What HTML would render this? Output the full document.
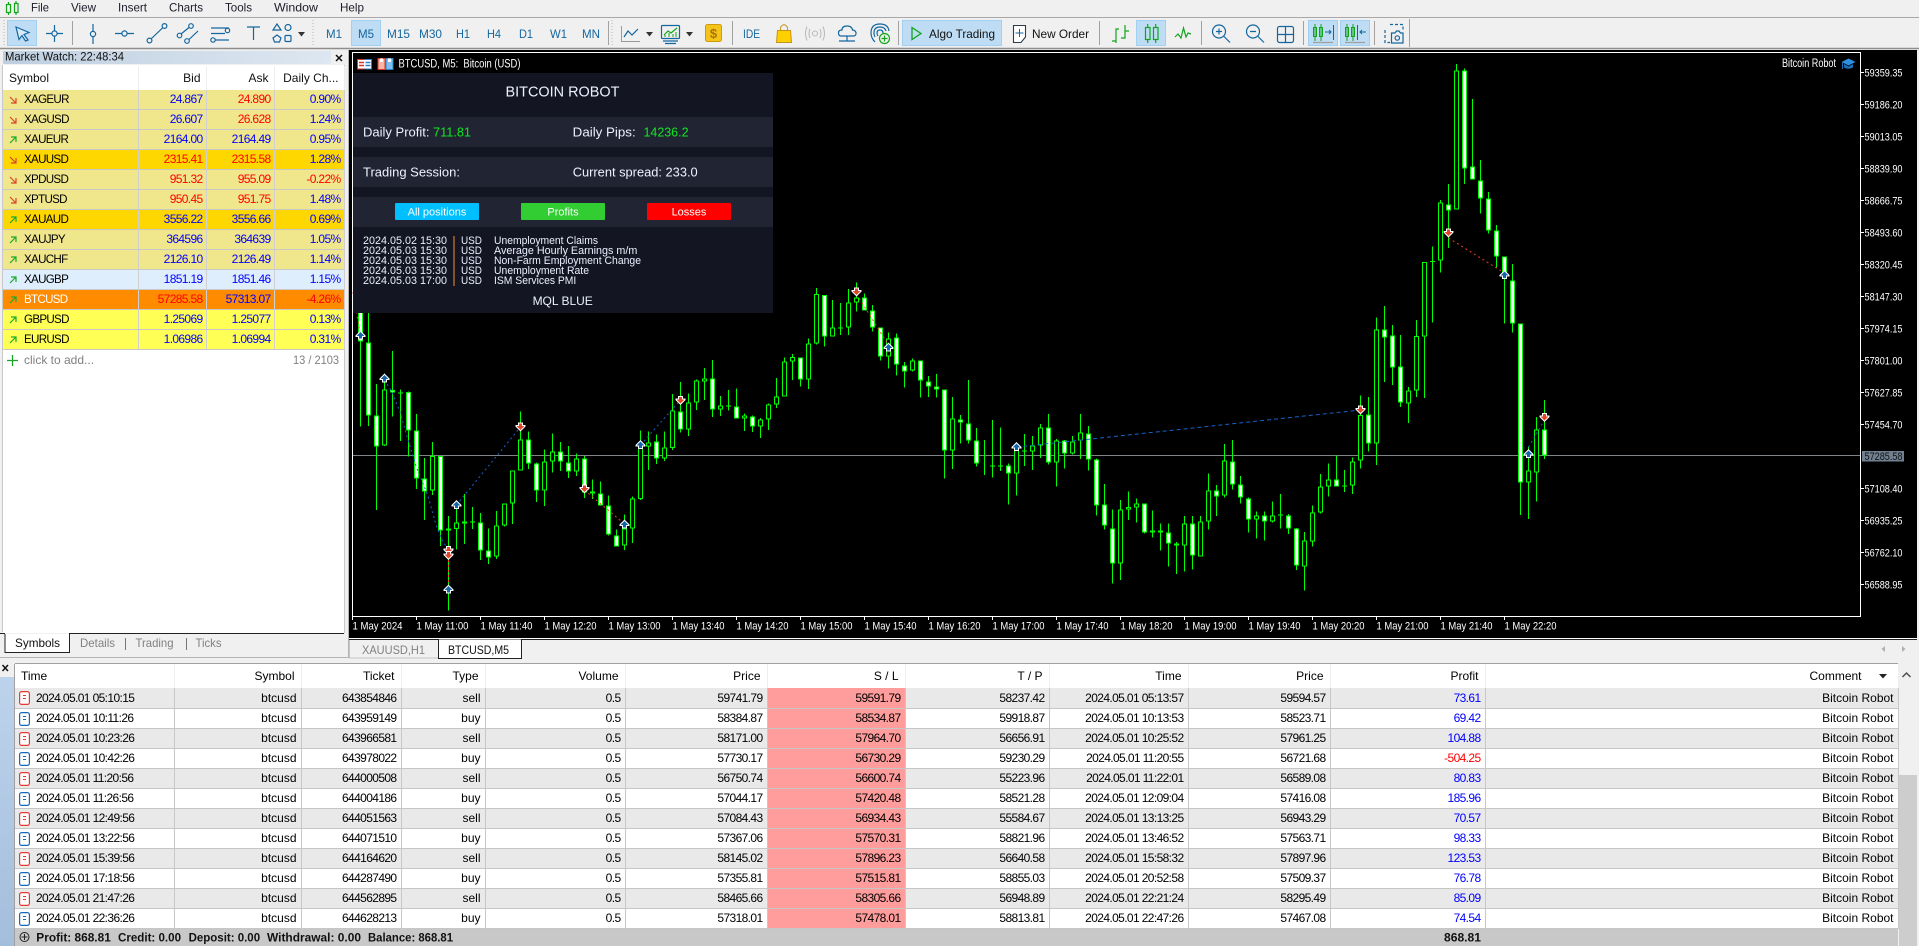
<!DOCTYPE html>
<html><head><meta charset="utf-8"><title>MetaTrader 5</title>
<style>
html,body{margin:0;padding:0;background:#f0f0f0}
body{width:1919px;height:946px;position:relative;overflow:hidden;font:12px "Liberation Sans",Arial,sans-serif;color:#111}
svg text{font-family:"Liberation Sans",Arial,sans-serif}
#bg{position:absolute;left:0;top:0}
.b{stroke:#14669f;fill:none;stroke-width:1.2}
.g{stroke:#12a51c;fill:none;stroke-width:1.2}
.c path{vector-effect:non-scaling-stroke;fill:none}
.cw{stroke:#0f0;stroke-width:1}
.cb{stroke:#0f0;stroke-width:5}
.ci{stroke:#fff;stroke-width:3}
.ck{stroke:#000;stroke-width:3}
table{border-collapse:collapse;table-layout:fixed;position:absolute}
#mw{left:3px;top:66px;width:341px}
#mw td,#mw th{height:19px;padding:0 3px 0 0;border-right:1px solid #d0d0d0;border-bottom:1px solid #c8c8c8;text-align:right;font-weight:normal;white-space:nowrap;overflow:hidden;color:#00f;letter-spacing:-.65px;box-sizing:content-box;line-height:17px}
#mw th{height:24px;background:#fff;color:#111;letter-spacing:0;padding-right:5px;border-bottom:none;border-right:1px solid #eee}
#mw th:first-child{text-align:left;padding-left:6px}
#mw td:first-child{text-align:left;padding-left:21px;color:#000;letter-spacing:-.7px;font-size:11.6px;position:relative}
#mw td svg{position:absolute;left:5.5px;top:6px}
#mw .r,#mw td.r{color:#f00}
#mw .k td{background:#f0e68c}
#mw .o td{background:#ffd700}
#mw .l td{background:#deeefd}
#mw .t td{background:#ff8c00}
#mw .t td:first-child{color:#fff}
#mw .y td{background:#ffff55}
#hist{left:15px;top:664px;width:1883px}
#hist th,#hist td{padding:0 4px 0 0;text-align:right;white-space:nowrap;overflow:hidden;font-weight:normal;box-sizing:border-box}
#hist th{height:24px;background:#fff;padding-right:6px;border-right:1px solid #eee;color:#000}
#hist td{height:20px;border-right:1px solid #c8c8c8;border-bottom:1px solid #c6c6c6;letter-spacing:-.62px;line-height:18px;color:#000}
#hist tbody tr:nth-child(odd) td{background:#e9e9e9}
#hist tbody tr:nth-child(even) td{background:#fff}
#hist td:nth-child(2),#hist td:nth-child(4),#hist td:nth-child(12){letter-spacing:0}
#hist tbody tr td:nth-child(7){background:#ff9c9c}
#hist td:nth-child(11){color:#00f}
#hist th:first-child{text-align:left;padding-left:6px}
#hist td:first-child{text-align:left;padding-left:21px;position:relative}
#hist td svg{position:absolute;left:4px;top:3px}
#hist td.neg{color:#f00}
</style></head><body>
<svg id="bg" width="1919" height="946" viewBox="0 0 1919 946">
<defs>
<symbol id="up" overflow="visible"><path d="M0-5L5 0V1.5H2.5V4H-2.5V1.5H-5V0Z" fill="#fff"/><path d="M0-3.5L3.5 0V.5H1.5V3H-1.5V.5H-3.5V0Z" fill="#1464a8"/></symbol>
<symbol id="dn" overflow="visible"><path d="M0 5L5 0V-1.5H2.5V-4H-2.5V-1.5H-5V0Z" fill="#fff"/><path d="M0 3.5L3.5 0V-.5H1.5V-3H-1.5V-.5H-3.5V0Z" fill="#e0452a"/></symbol>
</defs>
<!-- menu -->
<rect x="0" y="0" width="1919" height="49" fill="#f0f0f0"/>
<path d="M0 17.5H1919" stroke="#a8a8a8"/>
<path d="M0 48.5H1919" stroke="#8e8e8e" stroke-width="1.5"/>
<g fill="none" stroke="#12a51c" stroke-width="1.2"><rect x="6.5" y="4.5" width="4" height="8"/><path d="M8.5 2V4.5M8.5 12.5V15"/><rect x="14.5" y="3.5" width="3.5" height="9"/><path d="M16 1V3.5M16 12.5V15"/></g>
<g font-size="12" fill="#1c1c2a">
<text x="31" y="11.5" textLength="18" lengthAdjust="spacingAndGlyphs">File</text>
<text x="71" y="11.5" textLength="25" lengthAdjust="spacingAndGlyphs">View</text>
<text x="118" y="11.5" textLength="29" lengthAdjust="spacingAndGlyphs">Insert</text>
<text x="169" y="11.5" textLength="34" lengthAdjust="spacingAndGlyphs">Charts</text>
<text x="225" y="11.5" textLength="27" lengthAdjust="spacingAndGlyphs">Tools</text>
<text x="274" y="11.5" textLength="44" lengthAdjust="spacingAndGlyphs">Window</text>
<text x="340" y="11.5" textLength="24" lengthAdjust="spacingAndGlyphs">Help</text>
</g>
<!-- toolbar -->
<g stroke="#b4b4b4" stroke-dasharray="1 2"><path d="M4 20V46M313 20V46M612 20V46"/></g>
<g stroke="#a2a2a2"><path d="M72.5 21V45M608.5 21V45M732.5 21V45M898.5 21V45M1099.5 21V45M1201.5 21V45M1303.5 21V45M1374.5 21V45M1409.5 19V47"/></g>
<g fill="#bedcf3" stroke="#a2d0f2"><rect x="7.5" y="20.5" width="29" height="25"/><rect x="351.5" y="20.5" width="29" height="25"/><rect x="902.5" y="20.5" width="99" height="25"/><rect x="1136.5" y="20.5" width="29" height="25"/><rect x="1308.5" y="20.5" width="29" height="25"/><rect x="1340.5" y="20.5" width="29" height="25"/></g>
<path class="b" d="M16 27L29 32.5 24 34.5 28 40 25.5 41 22 35.5 19 39.5Z" style="fill:#d6eafa"/>
<g class="b"><path d="M46 33.5H63M54.5 25V42"/><circle cx="54.5" cy="33.5" r="2.6" style="fill:#f0f0f0"/></g>
<g class="b"><path d="M93 24V44"/><circle cx="93" cy="34" r="2.6" style="fill:#f0f0f0"/><path d="M115 33.5H134"/><circle cx="124.5" cy="33.5" r="2.6" style="fill:#f0f0f0"/></g>
<g class="b"><path d="M151 39L163 27.5"/><circle cx="149.5" cy="40.5" r="2.4"/><circle cx="164.5" cy="26" r="2.4"/></g>
<g class="b"><path d="M181 34L189 27.5M189 39.5L198 31"/><circle cx="179.5" cy="35.5" r="2.3"/><circle cx="191" cy="26" r="2.3"/><circle cx="187" cy="41" r="2.3"/></g>
<g class="b"><path d="M211 28H229M211 33.5H225M215 40H229"/><circle cx="227.5" cy="30.5" r="2.2"/><circle cx="213" cy="40" r="2.2"/></g>
<path class="b" d="M247 27H260M253.5 27V40"/>
<g class="b"><path d="M277 24L281 30H273Z"/><circle cx="288" cy="27.5" r="3"/><path d="M277 35L281 38 279.5 42H274.5L273 38Z"/><rect x="285" y="35.5" width="6" height="6" rx="1"/></g>
<path d="M298 32H305L301.5 36.5ZM646 32H653L649.5 36.5ZM686 32H693L689.5 36.5Z" fill="#333"/>
<g font-size="12" fill="#14669f">
<text x="326" y="38" textLength="16" lengthAdjust="spacingAndGlyphs">M1</text>
<text x="358" y="38" textLength="16" lengthAdjust="spacingAndGlyphs">M5</text>
<text x="387" y="38" textLength="23" lengthAdjust="spacingAndGlyphs">M15</text>
<text x="419" y="38" textLength="23" lengthAdjust="spacingAndGlyphs">M30</text>
<text x="456" y="38" textLength="14" lengthAdjust="spacingAndGlyphs">H1</text>
<text x="487" y="38" textLength="14" lengthAdjust="spacingAndGlyphs">H4</text>
<text x="519" y="38" textLength="14" lengthAdjust="spacingAndGlyphs">D1</text>
<text x="550" y="38" textLength="17" lengthAdjust="spacingAndGlyphs">W1</text>
<text x="582" y="38" textLength="18" lengthAdjust="spacingAndGlyphs">MN</text>
<text x="743" y="38" textLength="17" lengthAdjust="spacingAndGlyphs">IDE</text>
</g>
<path d="M621.5 26V41.5H640" stroke="#9a9a9a" fill="none"/><path class="b" d="M624 37L628 31 632 35 638 29"/>
<g class="b"><rect x="661.5" y="25.5" width="18" height="13" rx="1"/><path d="M663 41H678M665 43.5H676"/></g><path class="g" d="M664 35L668 31 671 33 677 28"/><path d="M665 37V35M669 37V33M673 37V34M676 37V32" stroke="#12a51c"/>
<rect x="705.5" y="24.5" width="16" height="17" rx="2" fill="#f6c416" stroke="#cd9a10"/><text x="713.5" y="38" font-size="13" font-weight="bold" text-anchor="middle" fill="#a87410">$</text>
<path d="M777.5 30.5H790.5L791.5 42.5H776.5Z" fill="#ffd000" stroke="#c6931a"/><path d="M780.5 31V27.5Q784 22 787.5 27.5V31" fill="none" stroke="#c6931a"/>
<g fill="none" stroke="#b8b8b8"><circle cx="815" cy="33.5" r="2.5"/><path d="M810 29Q808 33.5 810 38M820 29Q822 33.5 820 38M807 26.5Q804 33.5 807 40.5M823 26.5Q826 33.5 823 40.5"/></g>
<g class="b"><path d="M841 36H853Q856.5 36 856 32.5 855 30 852.5 30 852 26 847 26 842 26 842 30 838.5 30 838.5 33 838.5 36 841 36Z"/><path d="M847 36V41M839 41H855"/></g>
<g class="b"><path d="M875 42Q871 38 871 33 871 24 880 24 888 24 889 31M875 37Q874 35 874 33 874 27 880 27 885 27 886 31M878 36Q877 34.5 877 33 877 30 880 30 883 30 883 33"/></g><g class="g"><circle cx="884.5" cy="38.5" r="5"/><path d="M884.5 35.5V41.5M881.5 38.5H887.5"/></g>
<path d="M912 27.5L921 33.5 912 39.5Z" fill="none" stroke="#12a51c" stroke-width="1.3"/>
<text x="929" y="38" font-size="12" fill="#111" textLength="66" lengthAdjust="spacingAndGlyphs">Algo Trading</text>
<path d="M1013.5 25.5H1025.5V37L1021 42.5H1013.5Z" fill="#fff" stroke="#2f3b47" stroke-width="1.1"/><path d="M1019.5 29V37M1015.5 33H1023.5" stroke="#14669f"/>
<text x="1032" y="38" font-size="12" fill="#111" textLength="57" lengthAdjust="spacingAndGlyphs">New Order</text>
<path class="g" d="M1112 41H1116M1116 43V29H1119M1125 25V38H1121M1125 31H1129"/>
<g class="g"><rect x="1145.5" y="27.5" width="4.5" height="12"/><path d="M1147.7 24V27.5M1147.7 39.5V43"/><rect x="1153.5" y="27.5" width="4.5" height="12"/><path d="M1155.7 24V27.5M1155.7 39.5V43"/></g>
<path class="g" d="M1175 37L1178 34 1181 38 1183.5 28 1186 37 1188 33 1191 34"/>
<g class="b"><circle cx="1219" cy="31.5" r="6.5"/><path d="M1224 36.5L1230 42.5M1216 31.5H1222M1219 28.5V34.5"/><circle cx="1253" cy="31.5" r="6.5"/><path d="M1258 36.5L1264 42.5M1250 31.5H1256"/></g>
<g class="b"><rect x="1277.5" y="26.5" width="16" height="16" rx="2"/><path d="M1285.5 26.5V42.5M1277.5 34.5H1293.5"/></g>
<g fill="none" stroke="#12a51c"><rect x="1313.5" y="27.5" width="3" height="9"/><path d="M1315 24V41"/><rect x="1319.5" y="27.5" width="3" height="9"/><path d="M1321 24V41"/></g><path d="M1325 32H1331M1329 30L1331 32 1329 34M1333.5 25V40" stroke="#14669f" fill="none"/><path d="M1313 42.5H1333M1345 42.5H1365" stroke="#a0a0a0" stroke-width="1.3"/>
<g fill="none" stroke="#12a51c"><rect x="1345.5" y="27.5" width="3" height="9"/><path d="M1347 24V41"/><rect x="1351.5" y="27.5" width="3" height="9"/><path d="M1353 24V41"/></g><path d="M1357.5 25V40M1366 32H1360M1362 30L1360 32 1362 34" stroke="#14669f" fill="none"/>
<g class="b"><path d="M1390 24.5H1403V31M1385 30V42.5H1390" stroke-dasharray="3 2"/><path d="M1391.5 33H1395L1396.5 31H1399L1400.5 33H1403V43H1391.5Z" style="fill:#f0f0f0"/><circle cx="1397.3" cy="38" r="2.2"/></g>

<!-- left panel -->
<linearGradient id="mwg"><stop offset="0" stop-color="#bfcfe0"/><stop offset="1" stop-color="#dde7f1"/></linearGradient>
<rect x="3" y="51" width="328" height="13" fill="url(#mwg)"/>
<text x="5" y="60.5" font-size="12" fill="#111" textLength="119" lengthAdjust="spacingAndGlyphs">Market Watch: 22:48:34</text>
<path d="M336 55L342 61M342 55L336 61" stroke="#111" stroke-width="1.5"/>
<rect x="3" y="65" width="341" height="568" fill="#fff"/>
<path d="M2.5 65V632M344.5 65V633" stroke="#c8c8c8"/>
<path d="M0 633.5H5M69 633.5H344" stroke="#222"/>
<path d="M5 634V652.5H69.5V634" fill="#fff" stroke="#222"/>
<path d="M125.5 638V650M186.5 638V650" stroke="#777"/>
<text x="15" y="647" font-size="12" fill="#111" textLength="45" lengthAdjust="spacingAndGlyphs">Symbols</text>
<g font-size="12" fill="#808080"><text x="80" y="647" textLength="35" lengthAdjust="spacingAndGlyphs">Details</text><text x="135.5" y="647" textLength="38" lengthAdjust="spacingAndGlyphs">Trading</text><text x="195.5" y="647" textLength="26" lengthAdjust="spacingAndGlyphs">Ticks</text></g>
<path d="M0 657.5H348.5V50" fill="none" stroke="#b4b4b4"/>
<text x="24" y="364" font-size="12" fill="#808080">click to add...</text>
<text x="339" y="364" font-size="12" fill="#808080" text-anchor="end" textLength="46" lengthAdjust="spacingAndGlyphs">13 / 2103</text>
<path d="M7 360.5H18M12.5 355V366" stroke="#1aa52a" stroke-width="1.3"/>

<!-- chart -->
<rect x="349" y="50" width="1568" height="588" fill="#000"/>
<path d="M352.5 616.5V52.5H1860.5V616.5H352.5Z" fill="none" stroke="#fff"/>
<path d="M1860 72.5h4M1860 104.5h4M1860 136.5h4M1860 168.5h4M1860 200.5h4M1860 232.5h4M1860 264.5h4M1860 296.5h4M1860 328.5h4M1860 360.5h4M1860 392.5h4M1860 424.5h4M1860 488.5h4M1860 520.5h4M1860 552.5h4M1860 584.5h4" stroke="#fff"/>
<path d="M352.5 616v4M416.5 616v4M480.5 616v4M544.5 616v4M608.5 616v4M672.5 616v4M736.5 616v4M800.5 616v4M864.5 616v4M928.5 616v4M992.5 616v4M1056.5 616v4M1120.5 616v4M1184.5 616v4M1248.5 616v4M1312.5 616v4M1376.5 616v4M1440.5 616v4M1504.5 616v4" stroke="#fff"/>
<path d="M353 455.5H1860" stroke="#7f8489"/>
<g class="c" shape-rendering="crispEdges">
<g transform="translate(0,320) scale(1,.33333)">
<path class="cw" d="M360.5-30V320M368.5-30V318M376.5 192V570M384.5 160V378M392.5 93V290M400.5 208V363M408.5 215V410M416.5 282V507M424.5 414V600M432.5 366V525M440.5 408V678M448.5 588V872M456.5 550V688M464.5 522V672M472.5 561V627M480.5 579V720M488.5 625V732M496.5 573V717M504.5 550V620M512.5 451V612M520.5 274V452M528.5 334V447M536.5 428V546M544.5 388V558M552.5 340V458M560.5 366V453M568.5 378V474M576.5 400V468M584.5 408V534M592.5 478V537M600.5 484V556M608.5 526V647M616.5 628V680M624.5 583V690M632.5 529V669M640.5 331V540M648.5 334V450M656.5 344V432M664.5 334V423M672.5 222V390M680.5 186V338M688.5 220V348M696.5 178V270M704.5 144V240M712.5 120V291M720.5 228V288M728.5 210V272M736.5 205V296M744.5 280V333M752.5 286V336M760.5 294V354M768.5 250V330M776.5 174V264M784.5 112V230M792.5 102V180M800.5 112V200M808.5 55V207M816.5-96V74M824.5-75V80M832.5-60V50M840.5-51V45M848.5-93V45"/>
<path class="cb" d="M360.5-30V65M368.5 67V287M376.5 286V380M384.5 208V377M392.5 210V218M400.5 217V220M408.5 216V332M416.5 331V476M424.5 475V515M432.5 408V512M440.5 408V632M448.5 625V632M456.5 607V627M464.5 604V611M472.5 605V608M480.5 607V692M488.5 691V713M496.5 616V710M504.5 550V617M512.5 451V551M520.5 358V452M528.5 358V431M536.5 430V512M544.5 424V512M552.5 394V424M560.5 394V425M568.5 427V454M576.5 415V455M584.5 415V518M592.5 514V521M600.5 520V557M608.5 556V644M616.5 646V680M624.5 625V677M632.5 535V626M640.5 375V537M648.5 367V380M656.5 364V416M664.5 382V416M672.5 271V384M680.5 274V329M688.5 247V329M696.5 181V248M704.5 175V185M712.5 175V269M720.5 256V269M728.5 257V260M736.5 259V296M744.5 287V296M752.5 289V320M760.5 298V320M768.5 253V299M776.5 229V254M784.5 124V230M792.5 111V124M800.5 112V178M808.5 70V178M816.5-78V70M824.5-75V49M832.5 22V49M840.5 22V25M848.5-53V23"/>
<path class="ci" d="M360.5-30V62M368.5 70V284M376.5 289V377M392.5 213V215M408.5 219V329M416.5 334V473M424.5 478V512M440.5 411V629M448.5 628V629M480.5 610V689M488.5 694V710M528.5 361V428M536.5 433V509M560.5 397V422M568.5 430V451M584.5 418V515M592.5 517V518M600.5 523V554M608.5 559V641M616.5 649V677M656.5 367V413M680.5 277V326M712.5 178V266M736.5 262V293M752.5 292V317M800.5 115V175M824.5-72V46"/>
<path class="ck" d="M384.5 211V374M432.5 411V509M456.5 610V624M464.5 607V608M496.5 619V707M504.5 553V614M512.5 454V548M520.5 361V449M544.5 427V509M552.5 397V421M576.5 418V452M624.5 628V674M632.5 538V623M640.5 378V534M648.5 370V377M664.5 385V413M672.5 274V381M688.5 250V326M696.5 184V245M704.5 178V182M720.5 259V266M744.5 290V293M760.5 301V317M768.5 256V296M776.5 232V251M784.5 127V227M792.5 114V121M808.5 73V175M816.5-75V67M832.5 25V46M848.5-50V20"/>
</g>
<g transform="translate(0,250) scale(1,.33333)">
<path class="cw" d="M856.5 97V185M864.5 130V182M872.5 165V245M880.5 232V332M888.5 247V356M896.5 250V377M904.5 336V413M912.5 325V365M920.5 331V443M928.5 378V441M936.5 372V443M944.5 418V686M952.5 441V657M960.5 495V580M968.5 390V580M976.5 534V650M984.5 570V675M992.5 510V683M1000.5 533V663M1008.5 640V764M1016.5 578V737M1024.5 552V648M1032.5 558V660M1040.5 522V624M1048.5 492V644M1056.5 567V710M1064.5 570V656M1072.5 558V614M1080.5 492V627M1088.5 528V662M1096.5 625V797M1104.5 702V838M1112.5 778V1000M1120.5 750V990M1128.5 724V810M1136.5 746V818M1144.5 760V850M1152.5 782V863M1160.5 820V902M1168.5 820V950M1176.5 876V972M1184.5 798V965M1192.5 798V958M1200.5 798V920M1208.5 670V838M1216.5 705V798M1224.5 582V743M1232.5 570V718M1240.5 678V760M1248.5 742V848M1256.5 784V866M1264.5 784V872M1272.5 754V818M1280.5 732V836M1288.5 792V852M1296.5 834V960M1304.5 846V1022M1312.5 766V890M1320.5 672V790M1328.5 640V740M1336.5 617V709M1344.5 660V726M1352.5 622V732M1360.5 436V656M1368.5 441V604"/>
<path class="cb" d="M856.5 142V157M864.5 142V181M872.5 182V232M880.5 232V320M888.5 265V320M896.5 262V344M904.5 346V364M912.5 331V362M920.5 331V391M928.5 394V409M936.5 409V418M944.5 418V601M952.5 505V601M960.5 508V517M968.5 520V571M976.5 571V640M984.5 646V647M992.5 646V650M1000.5 646V650M1008.5 646V670M1016.5 600V670M1024.5 601V605M1032.5 587V605M1040.5 532V586M1048.5 532V638M1056.5 571V637M1064.5 572V610M1072.5 574V610M1080.5 547V572M1088.5 550V628M1096.5 628V766M1104.5 763V826M1112.5 835V940M1120.5 778V940M1128.5 771V778M1136.5 760V773M1144.5 760V848M1152.5 841V847M1160.5 841V847M1168.5 847V880M1176.5 880V886M1184.5 820V887M1192.5 820V916M1200.5 814V920M1208.5 721V814M1216.5 721V739M1224.5 631V737M1232.5 635V703M1240.5 703V742M1248.5 745V808M1256.5 796V808M1264.5 796V814M1272.5 796V814M1280.5 793V797M1288.5 796V835M1296.5 835V946M1304.5 871V950M1312.5 787V875M1320.5 709V788M1328.5 688V709M1336.5 688V709M1344.5 706V710M1352.5 634V707M1360.5 495V632M1368.5 493V581"/>
<path class="ci" d="M864.5 145V178M872.5 185V229M880.5 235V317M896.5 265V341M904.5 349V361M920.5 334V388M928.5 397V406M936.5 412V415M944.5 421V598M960.5 511V514M968.5 523V568M976.5 574V637M1008.5 649V667M1048.5 535V635M1064.5 575V607M1088.5 553V625M1096.5 631V763M1104.5 766V823M1112.5 838V937M1144.5 763V845M1152.5 844V845M1160.5 844V845M1168.5 850V877M1176.5 883V884M1192.5 823V913M1216.5 724V736M1232.5 638V700M1240.5 706V739M1248.5 748V805M1264.5 799V811M1288.5 799V832M1296.5 838V943M1336.5 691V706M1368.5 496V578"/>
<path class="ck" d="M856.5 145V154M888.5 268V317M912.5 334V359M952.5 508V598M1016.5 603V667M1032.5 590V602M1040.5 535V583M1056.5 574V634M1072.5 577V607M1080.5 550V569M1120.5 781V937M1128.5 774V775M1136.5 763V770M1184.5 823V884M1200.5 817V917M1208.5 724V811M1224.5 634V734M1256.5 799V805M1272.5 799V811M1304.5 874V947M1312.5 790V872M1320.5 712V785M1328.5 691V706M1352.5 637V704M1360.5 498V629"/>
</g>
<g transform="translate(0,300) scale(1,.33333)">
<path class="cw" d="M1376.5 52V495M1384.5 18V246M1392.5 75V255M1400.5 105V321M1408.5 261V369M1416.5 60V291M1520.5 70V645M1528.5 441V657M1536.5 351V605M1544.5 300V477"/>
<path class="cb" d="M1376.5 88V431M1384.5 88V113M1392.5 106V203M1400.5 199V308M1408.5 271V311M1416.5 108V272M1520.5 70V548M1528.5 511V548M1536.5 388V518M1544.5 388V466"/>
<path class="ci" d="M1384.5 91V110M1392.5 109V200M1400.5 202V305M1520.5 73V545M1544.5 391V463"/>
<path class="ck" d="M1376.5 91V428M1408.5 274V308M1416.5 111V269M1528.5 514V545M1536.5 391V515"/>
</g>
<g transform="translate(0,40) scale(1,.33333)">
<path class="cw" d="M1424.5 666V1074M1432.5 620V848M1440.5 480V698M1448.5 432V624M1456.5 72V508M1464.5 85V432M1472.5 177V418M1480.5 360V520M1488.5 456V580M1496.5 555V682M1504.5 649V850M1512.5 672V878"/>
<path class="cb" d="M1424.5 666V890M1432.5 663V666M1440.5 487V661M1448.5 493V511M1456.5 91V508M1464.5 91V385M1472.5 380V418M1480.5 421V476M1488.5 476V571M1496.5 571V649M1504.5 649V717M1512.5 722V850"/>
<path class="ci" d="M1448.5 496V508M1464.5 94V382M1472.5 383V415M1480.5 424V473M1488.5 479V568M1496.5 574V646M1504.5 652V714M1512.5 725V847"/>
<path class="ck" d="M1424.5 669V887M1440.5 490V658M1456.5 94V505"/>
</g>
</g>
<!-- trade lines -->
<g fill="none" stroke-width="1" stroke-dasharray="2 3" stroke="#1464c8">
<path d="M384.5 380L392 392 400 412 408 440 416 466 428 496 436 525 442 540 448.5 550"/>
<path d="M456.5 505L520.5 427"/>
<path d="M640.5 445L680.5 400"/>
<path d="M1016.5 447L1360.5 410" stroke-dasharray="4 3"/>
<path d="M1528.5 447L1544.5 420"/>
</g>
<g fill="none" stroke="#f03c28" stroke-dasharray="2 3">
<path d="M448.5 555V585"/><path d="M584.5 490L624.5 524"/><path d="M856.5 294L888.5 345"/><path d="M1448.5 238L1504.5 273"/><path d="M353 292L360 333"/>
</g>
<use href="#up" x="360.5" y="335.5"/><use href="#up" x="384.5" y="378.5"/><use href="#up" x="448.5" y="589.5"/><use href="#up" x="456.5" y="505"/><use href="#up" x="624.5" y="524.5"/><use href="#up" x="640.5" y="445"/><use href="#up" x="888.5" y="347.5"/><use href="#up" x="1016.5" y="447"/><use href="#up" x="1504.5" y="275"/><use href="#up" x="1528.5" y="454"/>
<use href="#dn" x="448.5" y="550"/><use href="#dn" x="448.5" y="555"/><use href="#dn" x="520.5" y="426.5"/><use href="#dn" x="584.5" y="488.5"/><use href="#dn" x="680.5" y="400"/><use href="#dn" x="856.5" y="291.5"/><use href="#dn" x="1360.5" y="409.5"/><use href="#dn" x="1448.5" y="232.5"/><use href="#dn" x="1544.5" y="417"/>
<g transform="translate(353,287)"><path d="M0 4L4 0V-2H0Z" fill="#fff"/></g>
<!-- chart title -->
<g><rect x="357.5" y="59.5" width="14" height="9.5" fill="#fff" stroke="#d8352a"/><path d="M364.5 59.5H371.5V69H364.5" fill="none" stroke="#2d7fc9"/><path d="M359 62.5H364M359 65.5H364" stroke="#d8352a" stroke-width="1.4"/><path d="M365.5 62.5H370.5M365.5 65.5H370.5" stroke="#2d7fc9" stroke-width="1.4"/></g>
<g><path d="M378 58.5H385V69.5H378Z" fill="#f7b7a8" stroke="#d8352a"/><path d="M380 58.5H383V62H380Z" fill="#fff"/><path d="M386 58.5H393V69.5H386Z" fill="#7fc0ee" stroke="#2d7fc9"/><path d="M388 58.5H391V62H388Z" fill="#fff"/></g>
<text x="398.5" y="67.5" font-size="11.5" fill="#fff" textLength="122" lengthAdjust="spacingAndGlyphs">BTCUSD, M5:&#160; Bitcoin (USD)</text>
<text x="1782" y="67" font-size="11.5" fill="#fff" textLength="54" lengthAdjust="spacingAndGlyphs">Bitcoin Robot</text>
<path d="M1848.5 58.5L1855.5 62 1848.5 65.5 1841.5 62Z" fill="#2c90e0"/><path d="M1844 64V67.5Q1848.5 70 1853 67.5V64L1848.5 66.5Z" fill="#1c6fb8"/><path d="M1842.5 62V69" stroke="#1c6fb8"/>
<!-- panel -->
<rect x="353" y="73" width="420" height="240" fill="#141522"/>
<rect x="353" y="117" width="420" height="30" fill="#212433"/><rect x="353" y="157" width="420" height="30" fill="#212433"/><rect x="353" y="197" width="420" height="30" fill="#212433"/>
<text x="505.500" y="96.5" font-size="15" fill="#eaf0ff" textLength="114" lengthAdjust="spacingAndGlyphs">BITCOIN ROBOT</text>
<g font-size="13.3" fill="#eef2ff">
<text x="363" y="136.5" textLength="66.5" lengthAdjust="spacingAndGlyphs">Daily Profit:</text><text x="433" y="136.5" fill="#10e820" textLength="38" lengthAdjust="spacingAndGlyphs">711.81</text>
<text x="572.7" y="136.5" textLength="63" lengthAdjust="spacingAndGlyphs">Daily Pips:</text><text x="643.5" y="136.5" fill="#10e820" textLength="45" lengthAdjust="spacingAndGlyphs">14236.2</text>
<text x="363" y="176.5" textLength="97" lengthAdjust="spacingAndGlyphs">Trading Session:</text>
<text x="572.7" y="176.5" textLength="125" lengthAdjust="spacingAndGlyphs">Current spread: 233.0</text>
</g>
<rect x="395" y="203" width="84" height="17" rx="1" fill="#00bfff"/><rect x="521" y="203" width="84" height="17" rx="1" fill="#32cd32"/><rect x="647" y="203" width="84" height="17" rx="1" fill="#f00"/>
<g font-size="11" fill="#fff" text-anchor="middle"><text x="437" y="215.500">All positions</text><text x="563" y="215.500">Profits</text><text x="689" y="215.500">Losses</text></g>
<path d="M454 236V286" stroke="#c0772e" stroke-width="1.3"/>
<g font-size="11" fill="#eaf0ff">
<text x="363" y="244" textLength="84" lengthAdjust="spacingAndGlyphs">2024.05.02 15:30</text><text x="461" y="244" textLength="21" lengthAdjust="spacingAndGlyphs">USD</text><text x="494" y="244" textLength="104" lengthAdjust="spacingAndGlyphs">Unemployment Claims</text>
<text x="363" y="254" textLength="84" lengthAdjust="spacingAndGlyphs">2024.05.03 15:30</text><text x="461" y="254" textLength="21" lengthAdjust="spacingAndGlyphs">USD</text><text x="494" y="254" textLength="143.3" lengthAdjust="spacingAndGlyphs">Average Hourly Earnings m/m</text>
<text x="363" y="264" textLength="84" lengthAdjust="spacingAndGlyphs">2024.05.03 15:30</text><text x="461" y="264" textLength="21" lengthAdjust="spacingAndGlyphs">USD</text><text x="494" y="264" textLength="147" lengthAdjust="spacingAndGlyphs">Non-Farm Employment Change</text>
<text x="363" y="274" textLength="84" lengthAdjust="spacingAndGlyphs">2024.05.03 15:30</text><text x="461" y="274" textLength="21" lengthAdjust="spacingAndGlyphs">USD</text><text x="494" y="274" textLength="95" lengthAdjust="spacingAndGlyphs">Unemployment Rate</text>
<text x="363" y="284" textLength="84" lengthAdjust="spacingAndGlyphs">2024.05.03 17:00</text><text x="461" y="284" textLength="21" lengthAdjust="spacingAndGlyphs">USD</text><text x="494" y="284" textLength="82.3" lengthAdjust="spacingAndGlyphs">ISM Services PMI</text>
</g>
<text x="562.7" y="305" font-size="12" fill="#eaf0ff" text-anchor="middle">MQL BLUE</text>
<!-- price axis -->
<g font-size="11" fill="#fff">
<text x="1864.5" y="76.5" textLength="38" lengthAdjust="spacingAndGlyphs">59359.35</text>
<text x="1864.5" y="108.5" textLength="38" lengthAdjust="spacingAndGlyphs">59186.20</text>
<text x="1864.5" y="140.5" textLength="38" lengthAdjust="spacingAndGlyphs">59013.05</text>
<text x="1864.5" y="172.5" textLength="38" lengthAdjust="spacingAndGlyphs">58839.90</text>
<text x="1864.5" y="204.5" textLength="38" lengthAdjust="spacingAndGlyphs">58666.75</text>
<text x="1864.5" y="236.5" textLength="38" lengthAdjust="spacingAndGlyphs">58493.60</text>
<text x="1864.5" y="268.5" textLength="38" lengthAdjust="spacingAndGlyphs">58320.45</text>
<text x="1864.5" y="300.5" textLength="38" lengthAdjust="spacingAndGlyphs">58147.30</text>
<text x="1864.5" y="332.5" textLength="38" lengthAdjust="spacingAndGlyphs">57974.15</text>
<text x="1864.5" y="364.5" textLength="38" lengthAdjust="spacingAndGlyphs">57801.00</text>
<text x="1864.5" y="396.5" textLength="38" lengthAdjust="spacingAndGlyphs">57627.85</text>
<text x="1864.5" y="428.5" textLength="38" lengthAdjust="spacingAndGlyphs">57454.70</text>
<text x="1864.5" y="492.5" textLength="38" lengthAdjust="spacingAndGlyphs">57108.40</text>
<text x="1864.5" y="524.5" textLength="38" lengthAdjust="spacingAndGlyphs">56935.25</text>
<text x="1864.5" y="556.5" textLength="38" lengthAdjust="spacingAndGlyphs">56762.10</text>
<text x="1864.5" y="588.5" textLength="38" lengthAdjust="spacingAndGlyphs">56588.95</text>
</g>
<rect x="1862" y="451" width="42" height="10.5" fill="#708090"/>
<text x="1864.5" y="460" font-size="11" fill="#111" textLength="38" lengthAdjust="spacingAndGlyphs">57285.58</text>
<!-- time axis -->
<g font-size="11" fill="#fff">
<text x="352.5" y="629.5" textLength="50" lengthAdjust="spacingAndGlyphs">1 May 2024</text>
<text x="416.5" y="629.5" textLength="52" lengthAdjust="spacingAndGlyphs">1 May 11:00</text>
<text x="480.5" y="629.5" textLength="52" lengthAdjust="spacingAndGlyphs">1 May 11:40</text>
<text x="544.5" y="629.5" textLength="52" lengthAdjust="spacingAndGlyphs">1 May 12:20</text>
<text x="608.5" y="629.5" textLength="52" lengthAdjust="spacingAndGlyphs">1 May 13:00</text>
<text x="672.5" y="629.5" textLength="52" lengthAdjust="spacingAndGlyphs">1 May 13:40</text>
<text x="736.5" y="629.5" textLength="52" lengthAdjust="spacingAndGlyphs">1 May 14:20</text>
<text x="800.5" y="629.5" textLength="52" lengthAdjust="spacingAndGlyphs">1 May 15:00</text>
<text x="864.5" y="629.5" textLength="52" lengthAdjust="spacingAndGlyphs">1 May 15:40</text>
<text x="928.5" y="629.5" textLength="52" lengthAdjust="spacingAndGlyphs">1 May 16:20</text>
<text x="992.5" y="629.5" textLength="52" lengthAdjust="spacingAndGlyphs">1 May 17:00</text>
<text x="1056.5" y="629.5" textLength="52" lengthAdjust="spacingAndGlyphs">1 May 17:40</text>
<text x="1120.5" y="629.5" textLength="52" lengthAdjust="spacingAndGlyphs">1 May 18:20</text>
<text x="1184.5" y="629.5" textLength="52" lengthAdjust="spacingAndGlyphs">1 May 19:00</text>
<text x="1248.5" y="629.5" textLength="52" lengthAdjust="spacingAndGlyphs">1 May 19:40</text>
<text x="1312.5" y="629.5" textLength="52" lengthAdjust="spacingAndGlyphs">1 May 20:20</text>
<text x="1376.5" y="629.5" textLength="52" lengthAdjust="spacingAndGlyphs">1 May 21:00</text>
<text x="1440.5" y="629.5" textLength="52" lengthAdjust="spacingAndGlyphs">1 May 21:40</text>
<text x="1504.5" y="629.5" textLength="52" lengthAdjust="spacingAndGlyphs">1 May 22:20</text>
</g>
<!-- chart tabs -->
<path d="M349 638.5H1917" stroke="#fff"/>
<path d="M349 639.5H1917" stroke="#222"/>
<path d="M438.5 639.5V658.5H521.5V639.5" fill="#fff" stroke="#222"/>
<path d="M349.5 640V658H438" fill="none" stroke="#c4c4c4"/>
<text x="362" y="654" font-size="12" fill="#808080" textLength="63" lengthAdjust="spacingAndGlyphs">XAUUSD,H1</text>
<text x="448" y="654" font-size="12" fill="#111" textLength="61" lengthAdjust="spacingAndGlyphs">BTCUSD,M5</text>
<path d="M1885 646V652L1881.5 649ZM1902 646V652L1905.5 649Z" fill="#b0b0b0"/>
<!-- bottom -->
<path d="M15 663.5H1898" stroke="#a0a0a0"/>
<path d="M2.5 665L8 671M8 665L2.5 671" stroke="#111" stroke-width="1.5"/>
<linearGradient id="st" x1="0" y1="0" x2="0" y2="1"><stop offset="0" stop-color="#bdd3ec"/><stop offset="1" stop-color="#a3bedb"/></linearGradient>
<rect x="0" y="677" width="14" height="269" fill="url(#st)"/>
<path d="M14.5 664V946" stroke="#a0a0a0"/>
<!-- summary bar -->
<rect x="15" y="928" width="1883" height="18" fill="#c8c8c8"/>
<circle cx="24.5" cy="937" r="4.5" fill="none" stroke="#222"/><path d="M21.5 937H27.5M24.5 934V940" stroke="#222"/>
<g font-size="12" font-weight="bold" fill="#111">
<text x="36.3" y="941.5" textLength="74.5" lengthAdjust="spacingAndGlyphs">Profit: 868.81</text>
<text x="118" y="941.5" textLength="63" lengthAdjust="spacingAndGlyphs">Credit: 0.00</text>
<text x="188.6" y="941.5" textLength="71.5" lengthAdjust="spacingAndGlyphs">Deposit: 0.00</text>
<text x="267" y="941.5" textLength="94" lengthAdjust="spacingAndGlyphs">Withdrawal: 0.00</text>
<text x="368" y="941.5" textLength="85" lengthAdjust="spacingAndGlyphs">Balance: 868.81</text>
<text x="1444" y="941.5" textLength="37" lengthAdjust="spacingAndGlyphs">868.81</text>
</g>
<!-- scrollbar -->
<rect x="1898" y="664" width="21" height="282" fill="#f0f0f0"/>
<path d="M1902.5 677L1906.5 673 1910.5 677" fill="none" stroke="#505050" stroke-width="1.5"/>
<rect x="1899" y="775" width="18" height="171" fill="#cdcdcd"/>
</svg>

<table id="mw"><colgroup><col style="width:135px"><col style="width:68px"><col style="width:68px"><col style="width:70px"></colgroup>
<tr><th>Symbol</th><th>Bid</th><th>Ask</th><th>Daily Ch...</th></tr>
<tr class="k"><td><svg width="8" height="8"><path d="M1 1L7 7M2 7H7V2" fill="none" stroke="#d8462a" stroke-width="1.2"/></svg>XAGEUR</td><td>24.867</td><td class="r">24.890</td><td>0.90%</td></tr>
<tr class="k"><td><svg width="8" height="8"><path d="M1 1L7 7M2 7H7V2" fill="none" stroke="#d8462a" stroke-width="1.2"/></svg>XAGUSD</td><td>26.607</td><td class="r">26.628</td><td>1.24%</td></tr>
<tr class="k"><td><svg width="8" height="8"><path d="M1 7L7 1M2 1H7V6" fill="none" stroke="#1aaa2a" stroke-width="1.2"/></svg>XAUEUR</td><td>2164.00</td><td>2164.49</td><td>0.95%</td></tr>
<tr class="o"><td><svg width="8" height="8"><path d="M1 1L7 7M2 7H7V2" fill="none" stroke="#d8462a" stroke-width="1.2"/></svg>XAUUSD</td><td class="r">2315.41</td><td class="r">2315.58</td><td>1.28%</td></tr>
<tr class="k"><td><svg width="8" height="8"><path d="M1 1L7 7M2 7H7V2" fill="none" stroke="#d8462a" stroke-width="1.2"/></svg>XPDUSD</td><td class="r">951.32</td><td class="r">955.09</td><td class="r">-0.22%</td></tr>
<tr class="k"><td><svg width="8" height="8"><path d="M1 1L7 7M2 7H7V2" fill="none" stroke="#d8462a" stroke-width="1.2"/></svg>XPTUSD</td><td class="r">950.45</td><td class="r">951.75</td><td>1.48%</td></tr>
<tr class="o"><td><svg width="8" height="8"><path d="M1 7L7 1M2 1H7V6" fill="none" stroke="#1aaa2a" stroke-width="1.2"/></svg>XAUAUD</td><td>3556.22</td><td>3556.66</td><td>0.69%</td></tr>
<tr class="k"><td><svg width="8" height="8"><path d="M1 7L7 1M2 1H7V6" fill="none" stroke="#1aaa2a" stroke-width="1.2"/></svg>XAUJPY</td><td>364596</td><td>364639</td><td>1.05%</td></tr>
<tr class="k"><td><svg width="8" height="8"><path d="M1 7L7 1M2 1H7V6" fill="none" stroke="#1aaa2a" stroke-width="1.2"/></svg>XAUCHF</td><td>2126.10</td><td>2126.49</td><td>1.14%</td></tr>
<tr class="l"><td><svg width="8" height="8"><path d="M1 7L7 1M2 1H7V6" fill="none" stroke="#1aaa2a" stroke-width="1.2"/></svg>XAUGBP</td><td>1851.19</td><td>1851.46</td><td>1.15%</td></tr>
<tr class="t"><td><svg width="8" height="8"><path d="M1 7L7 1M2 1H7V6" fill="none" stroke="#1aaa2a" stroke-width="1.2"/></svg>BTCUSD</td><td class="r">57285.58</td><td>57313.07</td><td class="r">-4.26%</td></tr>
<tr class="y"><td><svg width="8" height="8"><path d="M1 7L7 1M2 1H7V6" fill="none" stroke="#1aaa2a" stroke-width="1.2"/></svg>GBPUSD</td><td>1.25069</td><td>1.25077</td><td>0.13%</td></tr>
<tr class="y"><td><svg width="8" height="8"><path d="M1 7L7 1M2 1H7V6" fill="none" stroke="#1aaa2a" stroke-width="1.2"/></svg>EURUSD</td><td>1.06986</td><td>1.06994</td><td>0.31%</td></tr>
</table>

<svg width="0" height="0" style="position:absolute"><defs>
<symbol id="ts" viewBox="0 0 11 14"><rect x=".6" y=".6" width="9.8" height="12.8" rx="2" fill="#fff" stroke="#e53935" stroke-width="1.2"/><path d="M4 4.5H7M4 7.5H7" stroke="#e53935"/></symbol>
<symbol id="tb" viewBox="0 0 11 14"><rect x=".6" y=".6" width="9.8" height="12.8" rx="2" fill="#fff" stroke="#1568b8" stroke-width="1.2"/><path d="M4 4.5H7M4 7.5H7" stroke="#1568b8"/></symbol>
</defs></svg>

<table id="hist"><colgroup><col style="width:159px"><col style="width:127px"><col style="width:100px"><col style="width:84px"><col style="width:140px"><col style="width:142px"><col style="width:138px"><col style="width:144px"><col style="width:139px"><col style="width:142px"><col style="width:155px"><col style="width:413px"></colgroup>
<thead><tr><th>Time</th><th>Symbol</th><th>Ticket</th><th>Type</th><th>Volume</th><th>Price</th><th>S / L</th><th>T / P</th><th>Time</th><th>Price</th><th>Profit</th><th style="padding-right:36px;position:relative">Comment<svg width="9" height="5" style="position:absolute;right:10px;top:10px"><path d="M0 0H8L4 4.5Z" fill="#222"/></svg></th></tr></thead>
<tbody>
<tr><td><svg width="11" height="14"><use href="#ts"/></svg>2024.05.01 05:10:15</td><td>btcusd</td><td>643854846</td><td>sell</td><td>0.5</td><td>59741.79</td><td>59591.79</td><td>58237.42</td><td>2024.05.01 05:13:57</td><td>59594.57</td><td>73.61</td><td>Bitcoin Robot</td></tr>
<tr><td><svg width="11" height="14"><use href="#tb"/></svg>2024.05.01 10:11:26</td><td>btcusd</td><td>643959149</td><td>buy</td><td>0.5</td><td>58384.87</td><td>58534.87</td><td>59918.87</td><td>2024.05.01 10:13:53</td><td>58523.71</td><td>69.42</td><td>Bitcoin Robot</td></tr>
<tr><td><svg width="11" height="14"><use href="#ts"/></svg>2024.05.01 10:23:26</td><td>btcusd</td><td>643966581</td><td>sell</td><td>0.5</td><td>58171.00</td><td>57964.70</td><td>56656.91</td><td>2024.05.01 10:25:52</td><td>57961.25</td><td>104.88</td><td>Bitcoin Robot</td></tr>
<tr><td><svg width="11" height="14"><use href="#tb"/></svg>2024.05.01 10:42:26</td><td>btcusd</td><td>643978022</td><td>buy</td><td>0.5</td><td>57730.17</td><td>56730.29</td><td>59230.29</td><td>2024.05.01 11:20:55</td><td>56721.68</td><td class="neg">-504.25</td><td>Bitcoin Robot</td></tr>
<tr><td><svg width="11" height="14"><use href="#ts"/></svg>2024.05.01 11:20:56</td><td>btcusd</td><td>644000508</td><td>sell</td><td>0.5</td><td>56750.74</td><td>56600.74</td><td>55223.96</td><td>2024.05.01 11:22:01</td><td>56589.08</td><td>80.83</td><td>Bitcoin Robot</td></tr>
<tr><td><svg width="11" height="14"><use href="#tb"/></svg>2024.05.01 11:26:56</td><td>btcusd</td><td>644004186</td><td>buy</td><td>0.5</td><td>57044.17</td><td>57420.48</td><td>58521.28</td><td>2024.05.01 12:09:04</td><td>57416.08</td><td>185.96</td><td>Bitcoin Robot</td></tr>
<tr><td><svg width="11" height="14"><use href="#ts"/></svg>2024.05.01 12:49:56</td><td>btcusd</td><td>644051563</td><td>sell</td><td>0.5</td><td>57084.43</td><td>56934.43</td><td>55584.67</td><td>2024.05.01 13:13:25</td><td>56943.29</td><td>70.57</td><td>Bitcoin Robot</td></tr>
<tr><td><svg width="11" height="14"><use href="#tb"/></svg>2024.05.01 13:22:56</td><td>btcusd</td><td>644071510</td><td>buy</td><td>0.5</td><td>57367.06</td><td>57570.31</td><td>58821.96</td><td>2024.05.01 13:46:52</td><td>57563.71</td><td>98.33</td><td>Bitcoin Robot</td></tr>
<tr><td><svg width="11" height="14"><use href="#ts"/></svg>2024.05.01 15:39:56</td><td>btcusd</td><td>644164620</td><td>sell</td><td>0.5</td><td>58145.02</td><td>57896.23</td><td>56640.58</td><td>2024.05.01 15:58:32</td><td>57897.96</td><td>123.53</td><td>Bitcoin Robot</td></tr>
<tr><td><svg width="11" height="14"><use href="#tb"/></svg>2024.05.01 17:18:56</td><td>btcusd</td><td>644287490</td><td>buy</td><td>0.5</td><td>57355.81</td><td>57515.81</td><td>58855.03</td><td>2024.05.01 20:52:58</td><td>57509.37</td><td>76.78</td><td>Bitcoin Robot</td></tr>
<tr><td><svg width="11" height="14"><use href="#ts"/></svg>2024.05.01 21:47:26</td><td>btcusd</td><td>644562895</td><td>sell</td><td>0.5</td><td>58465.66</td><td>58305.66</td><td>56948.89</td><td>2024.05.01 22:21:24</td><td>58295.49</td><td>85.09</td><td>Bitcoin Robot</td></tr>
<tr><td><svg width="11" height="14"><use href="#tb"/></svg>2024.05.01 22:36:26</td><td>btcusd</td><td>644628213</td><td>buy</td><td>0.5</td><td>57318.01</td><td>57478.01</td><td>58813.81</td><td>2024.05.01 22:47:26</td><td>57467.08</td><td>74.54</td><td>Bitcoin Robot</td></tr>
</tbody></table>
</body></html>
